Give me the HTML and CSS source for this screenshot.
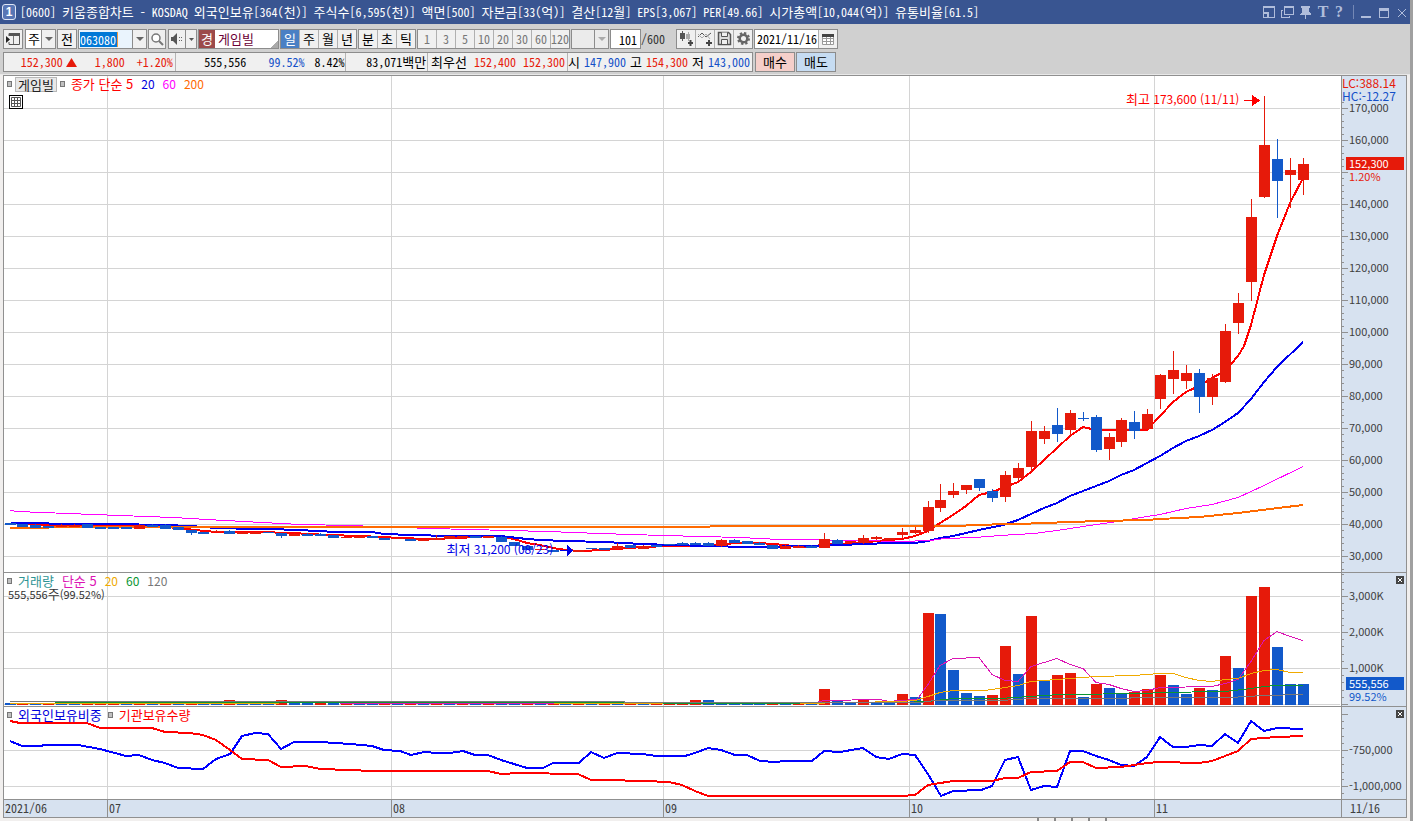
FILE: index.html
```html
<!DOCTYPE html>
<html lang="ko">
<head>
<meta charset="utf-8">
<title>[0600] 키움종합차트</title>
<link rel="stylesheet" href="styles.css">
</head>
<body>
<header class="titlebar">
  <span class="badge">1</span>
  <h1 class="title">[0600] <b>키움종합차트</b> - KOSDAQ <b>외국인보유</b>[364(<b>천</b>)] <b>주식수</b>[6,595(<b>천</b>)] <b>액면</b>[500] <b>자본금</b>[33(<b>억</b>)] <b>결산</b>[12<b>월</b>] EPS[3,067] PER[49.66] <b>시가총액</b>[10,044(<b>억</b>)] <b>유통비율</b>[61.5]</h1>
  <div class="window-tools">
    <button class="wbtn" aria-label="배치"><svg width="14" height="14" viewBox="0 0 14 14"><path class="solid" d="M1 1h12v12H1zM2 3v4h5v5h5V3zM2 9v3h3V9z" fill-rule="evenodd"/></svg></button>
    <button class="wbtn" aria-label="창 복제"><svg width="14" height="14" viewBox="0 0 14 14"><path class="solid" d="M4 1h10v9H4zM5 3v6h8V3zM1 5h2v1H2v6h7v-1h1v2H1z" fill-rule="evenodd"/></svg></button>
    <button class="wbtn" aria-label="고정"><svg width="14" height="15" viewBox="0 0 14 15"><path class="solid" d="M3 1h9v2h-1v4l2 2v1H8v4H7v-4H2V9l2-2V3H3z"/></svg></button>
    <button class="wbtn serif" aria-label="글꼴">T</button>
    <button class="wbtn serif narrow" aria-label="도움말">?</button>
    <span class="divider"></span>
    <button class="wbtn" aria-label="최소화"><svg width="14" height="14" viewBox="0 0 14 14"><path class="solid" d="M2 11h10v2H2z"/></svg></button>
    <button class="wbtn" aria-label="최대화"><svg width="14" height="14" viewBox="0 0 14 14"><path class="solid" d="M2 3h10v10H2zM3 6v6h8V6z" fill-rule="evenodd"/></svg></button>
    <button class="wbtn" aria-label="닫기"><svg width="14" height="14" viewBox="0 0 14 14"><path class="smooth" d="M3 4l8 8M11 4l-8 8"/></svg></button>
  </div>
</header>

<section class="toolbar">
  <div class="row">
    <button class="btn" aria-label="패널 열기"><svg width="16" height="16" viewBox="0 0 16 16"><path d="M4 5V2.500h10.500v11H4V11" fill="none" stroke="#555"/><path d="M4 2h11v3H4z" fill="#555"/><path d="M1 5l4 3.500L1 12z" fill="#222"/><path d="M8.500 5v8" stroke="#777"/></svg></button>
    <label class="combo w31"><select aria-label="종목 구분"><option>주</option></select><i class="arrow"></i></label>
    <button class="btn">전</button>
    <label class="combo w69 code"><input type="text" value="063080" aria-label="종목코드"><i class="arrow"></i></label>
    <button class="btn w18" aria-label="검색"><svg width="14" height="14" viewBox="0 0 14 14"><circle cx="6" cy="6" r="4" fill="#fff" stroke="#777" stroke-width="1.500"/><path d="M9 9l4 4" stroke="#777" stroke-width="2"/></svg></button>
    <div class="pair">
      <button class="btn w18" aria-label="소리"><svg width="14" height="14" viewBox="0 0 14 14"><path d="M1 5h2l4-4v12L3 9H1z" fill="#555"/><path d="M9 5h1v1H9zM11 5h1v1h-1zM9 8h1v1H9zM11 8h1v1h-1z" fill="#666"/></svg></button><button class="btn w11" aria-label="소리 선택"><svg width="5" height="3" viewBox="0 0 5 3"><path d="M0 0h5L2.500 3z" fill="#555"/></svg></button>
    </div>
    <div class="stock"><b>경</b><span>게임빌</span></div>
    <div class="seg"><button class="on">일</button><button>주</button><button>월</button><button>년</button></div>
    <div class="seg"><button>분</button><button>초</button><button>틱</button></div>
    <div class="seg dim"><button>1</button><button>3</button><button>5</button><button>10</button><button>20</button><button>30</button><button>60</button><button>120</button></div>
    <label class="combo w38 off"><select aria-label="분 단위" disabled><option></option></select><i class="arrow"></i></label>
    <div class="count"><input type="text" value="101" aria-label="표시 개수"><span>/600</span></div>
    <div class="seg icons">
      <button aria-label="차트 추가"><svg width="17" height="18" viewBox="0 0 17 18"><path d="M2 3h5v6H2zM4 1h1v10H4z" fill="#555"/><path d="M8 4h4v5H8zM10 2h1v9h-1z" fill="#aaa"/><path d="M10 13h5M12.500 10v6" stroke="#444" stroke-width="2"/></svg></button><button aria-label="지표 추가"><svg width="17" height="18" viewBox="0 0 17 18"><path d="M1 7l4-4 4 4 5-4" fill="none" stroke="#555"/><path d="M1 4l4 4 4-4 4 5" fill="none" stroke="#aaa"/><path d="M9 13h6M12 10v6" stroke="#444" stroke-width="2"/></svg></button><button aria-label="저장"><svg width="17" height="18" viewBox="0 0 17 18"><path d="M2.500 2.500h10l2 2v10h-12z" fill="#ddd" stroke="#555" stroke-width="1.500"/><path d="M5.500 2.500v4h6v-4M5.500 14V9.500h6V14" fill="#f0f0f0" stroke="#555"/></svg></button><button aria-label="설정"><svg width="17" height="18" viewBox="0 0 17 18"><circle cx="8.500" cy="8.500" r="5.500" fill="none" stroke="#666" stroke-width="2" stroke-dasharray="2.300 2"/><circle cx="8.500" cy="8.500" r="3.800" fill="none" stroke="#666" stroke-width="2.500"/></svg></button>
    </div>
    <label class="combo date"><input type="text" value="2021/11/16" aria-label="날짜"><i class="cal"><svg width="12" height="12" viewBox="0 0 12 12"><path d="M.500 2.500h11v9H.500zM.500 5.500h11M.500 8.500h11M4.500 3v8M8.500 3v8" fill="#fff" stroke="#999"/><path d="M0 1h12v3H0z" fill="#444"/></svg></i></label>
  </div>
  <div class="row">
    <div class="quote">
      <div class="cell c1 up"><span class="now">152,300<svg width="11" height="9" viewBox="0 0 11 9"><path d="M5.500 0L11 9H0z" fill="#e61a0a"/></svg></span><span>1,800</span><span>+1.20%</span></div>
      <div class="cell c2"><span class="vol">555,556</span><span class="down">99.52%</span><span>8.42%</span></div>
      <div class="cell c3"><span>83,071<b>백만</b></span></div>
      <div class="cell c4"><b>최우선</b><span class="up">152,400</span><span class="up">152,300</span></div>
      <div class="cell c5"><b>시</b><span class="down">147,900</span><b>고</b><span class="up">154,300</span><b>저</b><span class="down">143,000</span></div>
    </div>
    <button class="trade buy">매수</button>
    <button class="trade sell">매도</button>
  </div>
</section>

<main class="chart">
  <section class="pane">
    <div class="plot">
      <svg id="price" viewBox="4 76 1337 496" preserveAspectRatio="none"></svg>
      <div class="legend top">
        <i class="dot"></i><span class="tag">게임빌</span><i class="dot"></i>
        <span class="keys"><span class="red">종가 단순 5</span><span class="blue num">20</span><span class="magenta num">60</span><span class="orange num">200</span></span>
      </div>
      <button class="grid-btn" aria-label="표 보기"><svg width="10" height="10" viewBox="0 0 10 10"><path d="M.500.500h9v9h-9zM0 3.500h10M0 6.500h10M3.500 0v10M6.500 0v10" fill="none" stroke="#555"/></svg></button>
      <span class="note high"><b>최고</b> 173,600 (11/11)</span>
      <span class="note low"><b>최저</b> 31,200 (08/23)</span>
    </div>
    <div class="axis" id="price-axis">
      <span class="limits"><span class="up">LC:388.14</span><span class="down">HC:-12.27</span></span>
      <span class="last price-last"><b>152,300</b><span>1.20%</span></span>
    </div>
  </section>
  <section class="pane">
    <div class="plot">
      <svg id="volume" viewBox="4 573 1337 133" preserveAspectRatio="none"></svg>
      <div class="legend">
        <i class="dot"></i>
        <span class="keys"><span class="teal">거래량</span><span class="pink">단순 5</span><span class="gold num">20</span><span class="green num">60</span><span class="gray num">120</span></span>
      </div>
      <span class="volume-now">555,556<b>주</b>(99.52%)</span>
    </div>
    <div class="axis" id="volume-axis">
      <button class="shut" aria-label="거래량 닫기"><svg width="8" height="8" viewBox="0 0 8 8"><path d="M2 2l4 4M6 2L2 6" stroke="#fff"/></svg></button>
      <span class="last volume-last"><b>555,556</b><span>99.52%</span></span>
    </div>
  </section>
  <section class="pane">
    <div class="plot">
      <svg id="holding" viewBox="4 707 1337 92" preserveAspectRatio="none"></svg>
      <div class="legend">
        <i class="dot"></i><span class="blue">외국인보유비중</span><i class="dot"></i><span class="red">기관보유수량</span>
      </div>
    </div>
    <div class="axis" id="holding-axis">
      <button class="shut" aria-label="보유 지표 닫기"><svg width="8" height="8" viewBox="0 0 8 8"><path d="M2 2l4 4M6 2L2 6" stroke="#fff"/></svg></button>
    </div>
  </section>
  <footer class="time">
    <div class="months"><span>2021/06</span><span>07</span><span>08</span><span>09</span><span>10</span><span>11</span></div>
    <span class="today">11/16</span>
  </footer>
</main>
<div class="bottom"><i></i><i></i><i></i><i></i><i></i></div>
<script src="chart.js"></script>
</body>
</html>
```
FILE: styles.css
```css
* { box-sizing: border-box; }
html, body { height: 100%; }
body {
  margin: 0;
  display: flex;
  flex-direction: column;
  background: #f1efee;
  border-right: 3px solid #a0a0a0;
  font: 12px/14px "Noto Sans Mono CJK KR", "Noto Sans CJK KR", sans-serif;
  color: #000;
  overflow: hidden;
  white-space: nowrap;
}
button, input, select { font: inherit; color: inherit; margin: 0; padding: 0; border: 0; border-radius: 0; background: none; }
svg { display: block; }
i, b { font-style: normal; font-weight: normal; }
b, select, .btn, .stock, .seg, .trade { font-size: 13px; }

.titlebar { flex: none; display: flex; align-items: center; height: 24px; margin-right: -3px; padding: 0 4px 0 2px; background: #395591; color: #fff; }
.badge { width: 14px; height: 16px; margin-right: 4px; border: 1px solid #dfe6f5; border-radius: 3px; background: #5876b5; font: bold 12px/14px "Liberation Sans", sans-serif; text-align: center; }
.title { flex: 1; min-width: 0; margin: 0; font-size: 12px; font-weight: normal; line-height: 20px; overflow: hidden; }
.window-tools { display: flex; align-items: center; gap: 4px; color: #b0bddb; }
.wbtn { width: 14px; height: 16px; }
.wbtn svg { shape-rendering: crispEdges; }
.wbtn path { fill: none; stroke: #b0bddb; }
.wbtn .solid { fill: #b0bddb; stroke: none; }
.wbtn .smooth { shape-rendering: geometricPrecision; }
.serif { font: bold 16px/16px "Liberation Serif", serif; }
.narrow { width: 10px; }
.divider { width: 1px; height: 14px; margin: 0 1px 0 5px; background: #7488b5; }

.toolbar { flex: none; display: flex; flex-direction: column; gap: 3px; height: 51px; padding: 5px 3px 0; background: #d0d0d0; border-bottom: 1px solid #e8e8e8; }
.row { display: flex; gap: 1px; height: 20px; }
.btn { display: flex; align-items: center; justify-content: center; width: 20px; height: 20px; border: 1px solid #8c8c8c; background: #f0f0f0; }
.w18 { width: 18px; }
.w11 { width: 11px; }
.pair { display: flex; margin-left: 1px; }
.pair .w11 { border-left: 0; }
.combo { display: flex; height: 20px; border: 1px solid #8c8c8c; background: #fff; }
.combo select { flex: 1; min-width: 0; appearance: none; padding-left: 2px; }
.arrow { width: 14px; border-left: 1px solid #8c8c8c; background: #f0f0f0; display: flex; align-items: center; justify-content: center; }
.arrow::after { content: ""; border: 4px solid transparent; border-top: 4px solid #666; border-bottom: 0; }
.w31 { width: 31px; margin-left: 1px; }
.w69 { width: 69px; }
.code { justify-content: space-between; align-items: stretch; padding-left: 1px; background: #eaf4fd; }
.code input { width: 38px; height: 15px; margin-top: 2px; background: #0078d7; color: #fff; border-right: 1px solid #f59a3c; }
.w38 { width: 38px; }
.off, .off .arrow { background: #ebebeb; }
.off .arrow::after { border-top-color: #aaa; }
.stock { display: flex; align-items: center; gap: 3px; width: 81px; height: 20px; border: 1px solid #8c8c8c; background: linear-gradient(135deg, #fff 92%, #aaa 92%); color: #6b0035; }
.stock b { width: 16px; height: 18px; padding-left: 2px; line-height: 17px; background: #9c4a4a; color: #fff; }
.seg { display: flex; height: 20px; border: 1px solid #8c8c8c; background: #f0f0f0; }
.seg button { width: 19px; border-right: 1px solid #b0b0b0; display: flex; align-items: center; justify-content: center; }
.seg button:last-child { border-right: 0; width: 18px; }
.seg .on { background: #4a80c4; color: #fff; }
.dim { font-size: 12px; color: #777; }
.count { display: flex; align-items: center; width: 65px; color: #333; }
.count input { width: 31px; height: 20px; padding-right: 3px; border: 1px solid #8c8c8c; background: #fff; color: #000; text-align: right; }
.date { width: 84px; }
.date input { flex: 1; min-width: 0; padding-left: 2px; }
.cal { width: 19px; display: flex; align-items: center; justify-content: center; border-left: 1px solid #b0b0b0; background: #f0f0f0; }

.quote { display: flex; width: 750px; height: 20px; margin-right: 1px; border: 1px solid #8c8c8c; background: #f0f0f0; }
.cell { display: flex; align-items: center; justify-content: flex-end; padding-right: 2px; border-right: 1px solid #b4b4b4; }
.cell:last-child { border-right: 0; }
.c1 { width: 172px; gap: 12px; }
.now { display: flex; align-items: center; gap: 3px; margin-right: 6px; }
.c2 { width: 171px; gap: 10px; padding-right: 1px; }
.vol { margin-right: 12px; }
.c3 { width: 82px; padding-right: 1px; }
.c4 { width: 140px; gap: 7px; }
.c5 { flex: 1; gap: 4px; }
.up { color: #e61a0a; }
.down { color: #1450c8; }
.trade { width: 40px; height: 20px; border: 1px solid #8c8c8c; }
.buy { background: #f5cfca; }
.sell { background: #c6dcf2; }

.chart { flex: 1; min-height: 0; margin: 0 3px; display: grid; grid-template-rows: minmax(0, 497fr) minmax(0, 134fr) minmax(0, 93fr) 17px; border: 1px solid #909090; background: #fff; }
.pane { display: flex; min-height: 0; border-bottom: 1px solid #909090; font-family: "Noto Sans CJK KR", sans-serif; }
.plot { position: relative; flex: 1; min-width: 0; }
.plot > svg { width: 100%; height: 100%; shape-rendering: crispEdges; }
.axis { position: relative; width: 65px; border-left: 1px solid #909090; background: #d7e2f0; color: #404040; font-size: 11px; }
.axis > svg { width: 100%; height: 100%; shape-rendering: crispEdges; }
.label { position: absolute; left: 7px; padding-bottom: 2px; transform: translateY(-50%); }
.limits { position: absolute; top: 0; left: 0; display: flex; flex-direction: column; line-height: 13px; font-size: 12px; background: #d7e2f0; }
.last { position: absolute; left: 4px; right: 2px; display: flex; flex-direction: column; line-height: 13px; z-index: 1; }
.last b { height: 13px; padding-left: 3px; color: #fff; font-size: 11px; }
.last span { padding-left: 3px; }
.price-last { top: 16.400%; color: #e61a0a; }
.price-last b { background: #e61a0a; }
.volume-last { top: 78.200%; color: #1259ca; }
.volume-last b { background: #1259ca; }
.shut { position: absolute; top: 3px; right: 2px; width: 8px; height: 8px; background: #444; }
.legend { position: absolute; top: 1px; left: 3px; display: flex; align-items: center; gap: 6px; height: 14px; font-size: 13px; }
.keys { display: flex; align-items: center; gap: 8px; }
.num { font-size: 12px; }
.top { gap: 3px; }
.top .keys { margin-left: 3px; }
.dot { width: 5px; height: 6px; border: 1px solid #777; background: #c0c0c0; }
.tag { padding: 0 2px; border: 1px solid #b8b8b8; background: #e8e8e8; line-height: 13px; color: #222; }
.grid-btn { position: absolute; top: 19px; left: 5px; width: 14px; height: 14px; padding: 1px; border: 1px solid #000; background: #fff; }
.note { position: absolute; transform: translateY(-50%); }
.high { right: 7.600%; top: 4.700%; color: #f00; }
.low { left: 33.100%; top: 95.400%; color: #0000e6; }
.volume-now { position: absolute; top: 14px; left: 4px; color: #333; font-size: 11px; }
.red { color: #f00; }
.blue { color: #0000dc; }
.magenta { color: #f0f; }
.orange { color: #ff6a00; }
.teal { color: #2e9494; }
.pink { color: #dc14b4; }
.gold { color: #f0aa00; }
.green { color: #0a9632; }
.gray { color: #777; }

.time { display: flex; background: #d7e2f0; color: #404040; line-height: 15px; }
.months { flex: 1; display: grid; grid-template-columns: 103fr 284fr 272fr 246fr 245fr 187fr; }
.months span { padding-left: 1px; border-left: 1px solid #909090; }
.months span:first-child { border-left: 0; }
.today { width: 65px; padding-left: 8px; border-left: 1px solid #909090; }
.bottom { flex: none; height: 3px; display: flex; justify-content: flex-end; gap: 15px; padding-right: 303px; }
.bottom i { width: 2px; background: #888; }
```
FILE: chart.js
```js
const NS = "http://www.w3.org/2000/svg";
const RED = "#e61a0a", BLUE = "#1259ca";
const COUNT = 101;
const centre = i => Math.floor(10 + 12.93 * i);

function add(svg, tag, attrs) {
  const el = document.createElementNS(NS, tag);
  for (const k in attrs) el.setAttribute(k, attrs[k]);
  svg.appendChild(el);
}
function rect(svg, x, y, width, height, fill) {
  add(svg, "rect", { x, y, width, height, fill });
}
function line(svg, points, stroke, width) {
  add(svg, "polyline", { points, stroke, fill: "none", "stroke-width": width, "stroke-linejoin": "round" });
}
function grid(svg, top, height, rows) {
  [107, 391, 663, 909, 1154].forEach(x => rect(svg, x, top, 1, height, "#d4d4d4"));
  rows.forEach(y => rect(svg, 4, y, 1336, 1, "#d4d4d4"));
}
function axis(id, top, height, major, step, labels) {
  const host = document.getElementById(id);
  const svg = document.createElementNS(NS, "svg");
  svg.setAttribute("viewBox", `0 ${top} 64 ${height}`);
  svg.setAttribute("preserveAspectRatio", "none");
  for (let k = -100; k < 100; k++) {
    const y = Math.round(major[0] + k * step);
    if (y > top && y < top + height) rect(svg, 0, y, 2, 1, "#909090");
  }
  major.forEach(y => rect(svg, 0, y, 6, 1, "#909090"));
  host.prepend(svg);
  labels.forEach(([text, y]) => {
    const s = document.createElement("span");
    s.className = "label";
    s.textContent = text;
    s.style.top = (y - top) / height * 100 + "%";
    host.appendChild(s);
  });
}

/* Price: [up, body top, body bottom, wick top, wick bottom] */
const candles = [
[0,523,525],[0,524,527],[0,525,528],[0,526,528],[1,525,527],[1,525,527],[0,524,528],[0,527,529],[0,527,529],[0,527,529],
[1,525,529],[0,525,527],[0,525,529],[0,527,530],[0,530,533,530,535],[0,532,534],[1,531,532],[0,531,534],[1,532,534],[1,532,534],
[0,532,533],[0,533,536,533,538],[1,534,536],[0,534,536],[0,534,536],[0,535,538],[1,537,538],[1,536,538],[0,536,538],[0,538,540],
[1,538,539],[0,539,541],[1,539,541],[1,538,540,535,540],[1,536,539],[1,536,538],[0,536,538],[1,536,538],[0,537,542],[0,542,546],
[0,546,550],[1,549,550],[0,550,552],[0,550,551],[1,550,552],[0,548,549],[0,548,550],[1,546,549,543,549],[0,545,548],[1,546,549],
[0,545,547],[0,544,545],[0,543,545,542,545],[0,543,545,542,545],[0,543,546],[1,540,546,539,547],[0,540,543],[0,541,544],[0,543,545],[0,545,549],
[1,546,549],[1,546,548],[0,546,548],[1,539,548,533,548],[0,540,544],[1,541,543],[1,538,543,535,544],[1,537,539,536,540],[1,538,540],[1,532,535,528,538],
[1,530,533,527,534],[1,507,531,501,533],[1,500,508,484,512],[1,491,495,483,498],[1,485,490,485,494],[0,479,488,479,491],[0,491,498,489,502],[1,475,497,471,502],[1,468,478,463,482],[1,431,467,421,472],
[1,431,439,426,444],[0,425,434,408,442],[1,413,430,410,436],[0,418,419,412,421],[0,417,450,415,452],[1,437,449,433,460],[1,420,442,418,447],[0,422,431,411,439],[1,414,429,409,429],[1,375,399,374,409],
[1,370,379,351,394],[1,373,381,365,389],[0,373,397,369,413],[1,378,397,374,405],[1,331,382,324,383],[1,303,323,293,334],[1,217,282,199,301],[1,145,197,96,198],[0,159,181,139,218],[1,170,175,158,208],
[1,164,180,158,195]];

const price = document.getElementById("price");
const priceRows = [];
for (let y = 108; y <= 556; y += 32) priceRows.push(y);
grid(price, 76, 496, priceRows);
line(price, "22,524 48,525 87,525 139,526 165,527 178,528 195,530 216,532 255,532 294,533 307,534 330,535 358,536 384,537 397,538 430,539 460,538 490,536 501,537 514,539 527,543 540,545 553,548 566,550 580,551 604,550 630,548 643,547 669,546 695,546 720,545 735,543 760,543 785,545 800,547 824,545 837,544 863,543 876,541 902,539 915,536 928,531 940,523 953,515 966,506 979,495 992,492 1005,487 1018,482 1031,472 1044,460 1057,448 1070,436 1083,427 1096,430 1147,430 1160,416 1173,402 1186,392 1199,386 1212,378 1225,371 1238,356 1244,346 1251,325 1264,275 1277,236 1290,203 1303,178", "#f00", 2);
line(price, "11,523 48,523 50,524 113,524 165,525 190,526 216,528 255,529 272,529 320,531 334,532 372,532 384,534 411,535 450,536 500,536 527,539 540,540 566,541 604,542 643,544 670,545 708,546 747,547 765,547 800,546 840,545 890,543 915,543 928,541 940,538 953,536 966,533 979,530 1003,525 1018,520 1031,514 1044,508 1057,503 1070,496 1083,491 1096,486 1109,481 1121,475 1134,470 1147,463 1160,456 1173,448 1186,441 1199,436 1212,430 1225,422 1238,413 1251,399 1264,382 1277,367 1303,342", "#0000f0", 2);
line(price, "10,510.5 17,511.5 68,513.5 120,515.500 173,517.5 207,519.5 262,522.5 300,524.5 350,525.5 430,528.5 470,529.5 508,530.5 548,531.5 600,533.5 663,535.5 702,536.5 740,537.5 780,539.5 860,540.5 900,541.5 930,540.5 945,538.5 975,537.5 1000,535.5 1034,533.5 1057,530.5 1083,526.5 1111,522.5 1147,516.5 1160,514.5 1186,508.5 1212,504.5 1238,497.5 1264,485.5 1303,466.5", "#f0f", 1);
line(price, "10,528 48,528 49,527 700,527 720,526 965,526 967,525 1018,524 1044,523 1070,522 1100,521 1147,520 1160,519 1199,517 1238,513 1270,509 1303,505", "#ff6a00", 2);
candles.forEach(([up, a, b, hi = a - (a % 3 ? 0 : 1), lo = b], i) => {
  const x = centre(i), c = up ? RED : BLUE;
  rect(price, x, hi, 1, lo - hi, c);
  rect(price, x - 5, a, 11, b - a, c);
});
rect(price, 1244, 100, 9, 1, "#f00");
add(price, "polygon", { points: "1252,95 1260,100.5 1252,106", fill: "#f00" });
rect(price, 560, 550, 8, 1, "#0000e6");
add(price, "polygon", { points: "567,545 573,550.5 567,556", fill: "#0000e6" });
axis("price-axis", 76, 496, priceRows, 6.4, priceRows.map((y, k) => [(170 - 10 * k) + ",000", y]).filter(l => l[1] !== 172));

/* Volume: letter gives direction, number gives bar top */
const early = "drdrddrrrdrdrdrddRdddRddrdrddrdrdrdrdrddrdrdrdrdrdrrrRDddddrdrd";
const late = [[1,689],[0,700],[0,702],[1,699],[0,702],[0,702],[1,694],[0,697],[1,613],[0,614],[0,670],[0,693],[0,696],[1,695],[1,646],[0,674],[1,616],[0,681],[1,675],[1,673],[0,697],[1,684],[0,688],[0,693],[1,692],[1,689],[1,675],[0,685],[0,694],[1,688],[0,690],[1,656],[0,668],[1,596],[1,587],[0,647],[0,684],[0,684]];
const bars = [...early].slice(0, COUNT - late.length).map(c => [/r/i.test(c) ? 1 : 0, c === c.toUpperCase() ? 700 : 703]).concat(late);
const volume = document.getElementById("volume");
grid(volume, 573, 133, [596, 632, 668, 704]);
bars.forEach(([up, top], i) => rect(volume, centre(i) - 5, top, 11, 705 - top, up ? RED : BLUE));
line(volume, "340,703.5 440,703.5 690,703.5 790,703.5 816,702.5 824,700.5 880,699.5 889,701.5 900,700.5 917,699.5 928,684.5 940,665.5 953,658.5 979,657.5 992,674.5 1005,680.5 1018,681.5 1031,666.5 1044,662.5 1057,658.5 1070,664.5 1083,668.5 1096,682.5 1109,684.5 1121,688.5 1134,691.5 1147,690.5 1160,687.5 1212,686.5 1225,683.5 1238,679.5 1251,661.5 1264,640.5 1277,631.5 1290,636.5 1303,640.5", "#dc14b4", 1);
line(volume, "10,703.5 120,703.5 440,702.5 485,702.5 620,703.5 800,703.5 900,701.5 915,700.5 928,696.5 940,692.5 953,690.5 985,690.5 1005,687.5 1018,685.5 1031,681.5 1070,678.5 1096,676.5 1134,675.5 1160,673.5 1173,673.5 1186,677.5 1199,680.5 1212,681.5 1225,679.5 1238,678.5 1251,673.5 1264,670.5 1277,669.5 1290,672.5 1303,672.5", "#f0aa00", 1);
line(volume, "55,702.5 624,702.5 700,703.5 900,702.5 928,701.5 953,698.5 1000,698.5 1030,696.5 1060,694.5 1147,693.5 1160,692.5 1225,691.5 1251,688.5 1264,686.5 1277,685.5 1303,685.5", "#0a9632", 1);
line(volume, "10,701.5 624,701.5 625,702.5 920,702.5 935,700.5 1000,700.5 1031,698.5 1230,697.5 1264,695.5 1303,694.5", "#777", 1);
axis("volume-axis", 573, 133, [596, 632, 668, 704], 7.2, [["3,000K", 596], ["2,000K", 632], ["1,000K", 668]]);

/* Foreign holding ratio and institutional holding */
const holding = document.getElementById("holding");
grid(holding, 707, 92, [750, 786]);
line(holding, "10,741 22,746 41,746 44,745 78,745 100,749 126,756 139,755 152,760 165,763 178,768 203,769 216,759 230,754 242,736 255,733 268,734 281,749 294,742 320,742 350,744 372,746 384,750 400,751 411,755 424,752 437,753 450,753 463,751 475,755 488,755 501,760 514,764 527,768 543,768 553,763 579,763 591,752 604,758 617,753 643,754 656,756 685,756 695,753 708,748 721,750 735,755 747,755 760,761 775,762 785,761 812,761 824,751 840,752 863,748 876,757 889,759 902,754 915,755 928,774 941,796 953,791 981,790 992,786 1005,760 1018,757 1031,790 1044,786 1057,787 1070,751 1083,751 1096,756 1109,760 1121,765 1134,766 1147,757 1160,737 1173,747 1186,747 1199,745 1212,746 1225,734 1238,743 1251,721 1264,731 1277,728 1303,729", "#00f", 2);
line(holding, "10,721 20,723 87,723 100,728 152,728 165,732 190,733 203,735 216,740 230,750 242,759 268,760 281,767 306,766 320,769 350,770 372,771 488,771 501,774 520,773 578,774 591,780 604,780 645,781 669,782 682,785 695,791 708,796 902,796 915,795 928,785 953,781 992,781 1005,778 1018,778 1031,772 1057,771 1070,762 1083,762 1096,768 1121,767 1147,763 1160,762 1199,763 1212,761 1225,756 1238,751 1251,739 1277,737 1303,736", "#f00", 2);
axis("holding-axis", 707, 92, [714, 750, 786], 7.2, [["-750,000", 750], ["-1,000,000", 786]]);
```
